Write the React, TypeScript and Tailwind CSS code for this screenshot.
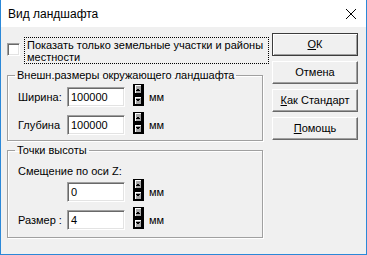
import React from "react";

function Spin() {
  // маленькие кнопки-счётчики (тёмный классический вид)
  return (
    <svg width="11" height="22" viewBox="0 0 11 22" className="block">
      <rect x="0" y="0" width="11" height="11" fill="#000" />
      <rect x="2" y="1" width="6" height="8" fill="#a8a8a8" />
      <rect x="2" y="1" width="6" height="1" fill="#fff" />
      <rect x="2" y="1" width="1" height="8" fill="#fff" />
      <rect x="4" y="5" width="2" height="1" fill="#000" />
      <rect x="3" y="6" width="4" height="1" fill="#000" />
      <rect x="0" y="11" width="11" height="11" fill="#000" />
      <rect x="2" y="13" width="6" height="7" fill="#a8a8a8" />
      <rect x="2" y="13" width="6" height="1" fill="#fff" />
      <rect x="2" y="13" width="1" height="7" fill="#fff" />
      <rect x="3" y="15" width="4" height="1" fill="#000" />
      <rect x="4" y="16" width="2" height="1" fill="#000" />
    </svg>
  );
}

function Field({ value }: { value: string }) {
  return (
    <div className="w-[58px] h-[20px] bg-white border border-t-[#a0a0a0] border-l-[#a0a0a0] border-b-[#fff] border-r-[#fff] shadow-[inset_1px_1px_0_#696969,inset_-1px_-1px_0_#e3e3e3] pl-[3px] pt-[3px] leading-[13px] text-black">
      {value}
    </div>
  );
}

function Row({ label, value, labelW = "w-[59px]" }: { label: string; value: string; labelW?: string }) {
  return (
    <div className="flex items-start h-[22px]">
      <span className={`${labelW} pl-[10px] mt-[7px] leading-[13px] whitespace-nowrap`}>{label}</span>
      <div className="mt-[3px]">
        <Field value={value} />
      </div>
      <div className="ml-[8px]">
        <Spin />
      </div>
      <span className="ml-[5px] mt-[7px] leading-[13px]">мм</span>
    </div>
  );
}

function Btn({ children, def = false }: { children: React.ReactNode; def?: boolean }) {
  return (
    <button
      className={`w-[86px] h-[23px] bg-[#f0f0f0] text-black text-[11px] leading-[13px] border ${
        def ? "border-[#3c3c3c]" : "border-t-[#fff] border-l-[#fff] border-b-[#696969] border-r-[#696969]"
      } ${def ? "shadow-[inset_1px_1px_0_#fff,inset_-1px_-1px_0_#a0a0a0]" : "shadow-[inset_-1px_-1px_0_#a0a0a0]"}`}
    >
      {children}
    </button>
  );
}

export default function App() {
  return (
    <div className="w-[367px] h-[255px] bg-[#f0f0f0] border-x border-b border-[#2b88d8] flex flex-col text-[11px] text-black font-['Liberation_Sans',Arial,sans-serif] overflow-hidden">
      {/* Заголовок */}
      <div className="h-[27px] bg-white flex items-center justify-between pl-[7px] pr-[9px] shrink-0">
        <span className="text-[12px]">Вид ландшафта</span>
        <svg width="12" height="12" viewBox="0 0 12 12">
          <path d="M1 1 L11 11 M11 1 L1 11" stroke="#000" strokeWidth="1" />
        </svg>
      </div>

      <div className="flex items-start pl-[6px]">
        {/* Левая часть */}
        <div className="w-[263px] pt-[10px] flex flex-col">
          <div className="flex items-start">
            <div className="w-[13px] h-[13px] mt-[6px] bg-white border border-t-[#a0a0a0] border-l-[#a0a0a0] border-b-[#fff] border-r-[#fff] shadow-[inset_1px_1px_0_#696969,inset_-1px_-1px_0_#e3e3e3]" />
            <div className="ml-[4px] w-[245px] h-[27px] border border-dotted border-black px-[2px] pt-[1px] leading-[12px]">
              Показать только земельные участки и районы местности
            </div>
          </div>

          <fieldset className="mt-[5px] w-[256px] border border-[#a0a0a0] shadow-[1px_1px_0_#fff,inset_1px_1px_0_#fff] pb-[6px]">
            <legend className="ml-[7px] px-[2px] leading-[13px]">Внешн.размеры окружающего ландшафта</legend>
            <div className="mt-[2px] flex flex-col gap-[6px]">
              <Row label="Ширина:" value="100000" />
              <Row label="Глубина" value="100000" />
            </div>
          </fieldset>

          <fieldset className="mt-[3px] w-[256px] border border-[#a0a0a0] shadow-[1px_1px_0_#fff,inset_1px_1px_0_#fff] pb-[8px]">
            <legend className="ml-[7px] px-[2px] leading-[13px]">Точки высоты</legend>
            <div className="pl-[10px] mt-[8px] leading-[13px]">Смещение по оси Z:</div>
            <div className="mt-[1px] flex flex-col gap-[6px]">
              <Row label="" value="0" />
              <Row label="Размер :" value="4" />
            </div>
          </fieldset>
        </div>

        {/* Кнопки */}
        <div className="ml-[2px] pt-[6px] flex flex-col gap-[5px]">
          <Btn def>
            <span className="underline">О</span>К
          </Btn>
          <Btn>Отмена</Btn>
          <Btn>
            <span className="underline">К</span>ак Стандарт
          </Btn>
          <Btn>
            <span className="underline">П</span>омощь
          </Btn>
        </div>
      </div>
    </div>
  );
}
